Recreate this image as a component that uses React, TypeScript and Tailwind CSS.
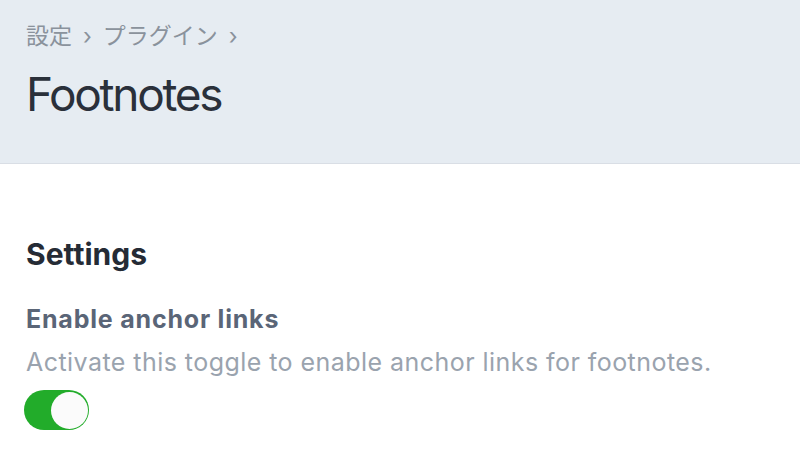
import { useState } from "react";

const font = { fontFamily: '"Inter", "Noto Sans CJK JP", sans-serif' };

export default function App() {
  const [on, setOn] = useState(true);

  return (
    <div className="w-[800px] h-[465px] bg-white overflow-hidden" style={font}>
      <header className="h-[164px] bg-[#e6ecf2] border-b border-[#d9dee5] px-[26px] pt-[20px]">
        <nav className="flex items-center gap-[11px] text-[23px] leading-[32px] text-[#8a929c]">
          <span>設定</span>
          <span>›</span>
          <span>プラグイン</span>
          <span>›</span>
        </nav>
        <h1 className="mt-[14px] text-[46px] leading-[56px] tracking-[-0.05em] text-[#2a303a]">Footnotes</h1>
      </header>

      <main className="px-[26px] pt-[70px]">
        <h2 className="text-[30px] leading-[40px] font-bold text-[#252b35]">Settings</h2>
        <div className="mt-[28px]">
          <h3 className="text-[25px] leading-[34px] font-bold tracking-[0.8px] text-[#5a6577]">Enable anchor links</h3>
          <p className="mt-[9px] text-[25px] leading-[34px] tracking-[0.45px] text-[#9aa3ae]">
            Activate this toggle to enable anchor links for footnotes.
          </p>
          <button
            onClick={() => setOn(!on)}
            className={
              "mt-[11px] -ml-[2px] w-[65px] h-[40px] rounded-full p-[1.5px] flex items-center " +
              (on ? "bg-[#22ac2a] justify-end" : "bg-[#d5dae0] justify-start")
            }
          >
            <span className="w-[37px] h-[37px] rounded-full bg-[#fbfbfb] block" />
          </button>
        </div>
      </main>
    </div>
  );
}
